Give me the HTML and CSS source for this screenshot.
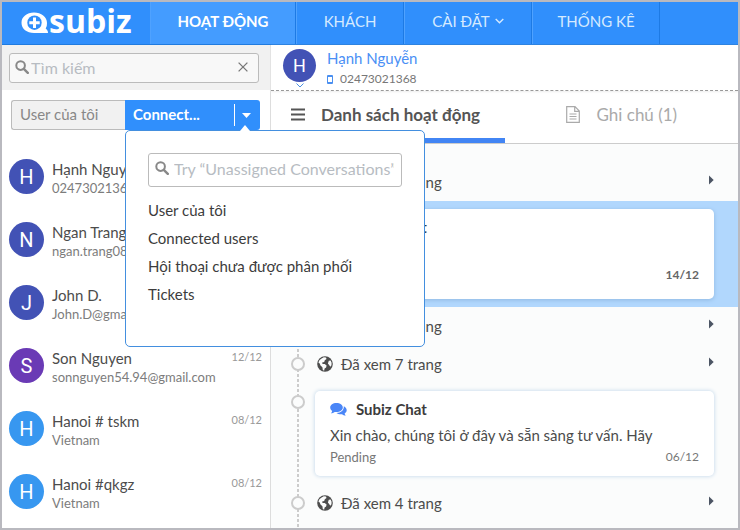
FILE: index.html
```html
<!DOCTYPE html>
<html lang="vi">
<head>
<meta charset="utf-8">
<meta name="viewport" content="width=device-width, initial-scale=1">
<title>Subiz</title>
<link rel="stylesheet" href="styles.css">
</head>
<body>
<svg class="defs" aria-hidden="true">
  <symbol id="search" viewBox="0 0 14 14"><circle cx="5.6" cy="5.6" r="4.3" fill="none" stroke="currentColor" stroke-width="2"/><path d="M8.8 8.8l4 4" stroke="currentColor" stroke-width="2.4" stroke-linecap="round"/></symbol>
  <symbol id="globe" viewBox="0 0 16 16"><circle cx="8" cy="8" r="7.800" fill="#4d4d4d"/><path d="M6.800 1.300l2.200.3.500 1.300-1.700 1.300-.6 1.700-2 .7.3 1.300 2.200.1 1.900 1.500-.5 2-1.500 1-.5 2.300-1.300-.9-.4-2.700-1.900-1.600-.8-2.100L1.400 6.500l1-2.300 2.200-1.800zM11.800 4.800l1.800-.2 1 2.100-.1 2.500-1.200 1.500-1.200-1.800-1.200-1.500z" fill="#fbfcfc"/></symbol>
  <symbol id="right" viewBox="0 0 5 10"><path d="M0 .5L4.700 5 0 9.500z" fill="#4c5564"/></symbol>
  <symbol id="chat" viewBox="0 0 17 14"><path d="M6.500 1C2.900 1 .2 2.900.2 5.500c0 1.500.8 2.700 2 3.500-.1.900-.6 1.600-1.300 2.200 1.500 0 2.800-.5 3.800-1.300l1.800.1c3.600 0 6.300-2 6.300-4.500S10.100 1 6.500 1z" fill="#4a86f7"/><path d="M13.800 4.200c.5 3.700-2.800 6.600-7.300 6.700 1 .9 2.500 1.400 4.100 1.400l1.400-.1c1 .8 2.200 1.300 3.800 1.300-.7-.6-1.100-1.200-1.200-2 1.300-.8 2.100-1.900 2.100-3.200 0-1.800-1.100-3.300-2.900-4.100z" fill="#4a86f7"/></symbol>
</svg>
<div class="app">
  <header class="top">
    <a class="logo" href="#" aria-label="subiz">
      <svg class="logo-mark" viewBox="0 0 28 22" aria-hidden="true"><path d="M13 .5C5.800.5.5 4.800.5 10.700.5 16.700 5.800 21 13 21h14c0-2-.8-3-2.300-4.400A10 10 0 0 0 26 11C26 4.800 20.200.5 13 .5z" fill="#fff"/><circle cx="13.500" cy="10.700" r="7.200" fill="#308ffc"/><path d="M13.500 5.500v10.400M8.300 10.700h10.400" stroke="#fff" stroke-width="3"/></svg>
      <span class="logo-word">subiz</span>
    </a>
    <nav class="nav">
      <a class="nav-item wide active" href="#">HOẠT ĐỘNG</a>
      <a class="nav-item slim" href="#">KHÁCH</a>
      <a class="nav-item" href="#">CÀI ĐẶT <svg class="nav-chev" viewBox="0 0 9 6" aria-hidden="true"><path d="M.7.9l3.800 3.800L8.300.9" fill="none" stroke="currentColor" stroke-width="1.400"/></svg></a>
      <a class="nav-item" href="#">THỐNG KÊ</a>
    </nav>
  </header>
  <main class="body">
    <aside class="side">
      <div class="search-bar">
        <div class="field">
          <svg class="field-icon" aria-hidden="true"><use href="#search"/></svg>
          <input type="text" placeholder="Tìm kiếm" aria-label="Tìm kiếm">
          <button class="clear" type="button" aria-label="Xóa"><svg viewBox="0 0 10 10"><path d="M.6.600l8.800 8.800M9.400.600L.6 9.400" stroke="#777" stroke-width="1.300"/></svg></button>
        </div>
      </div>
      <div class="filter">
        <button class="filter-mine" type="button">User của tôi</button>
        <button class="filter-on" type="button">Connect...</button>
        <button class="filter-more" type="button" aria-label="Mở"><svg viewBox="0 0 9 5"><path d="M0 0h9L4.500 5z" fill="#fff"/></svg></button>
        <div class="popup">
          <div class="field popup-field">
            <svg class="field-icon" aria-hidden="true"><use href="#search"/></svg>
            <input type="text" placeholder="Try “Unassigned Conversations”" aria-label="Try “Unassigned Conversations”">
          </div>
          <ul class="options">
            <li><a href="#">User của tôi</a></li>
            <li><a href="#">Connected users</a></li>
            <li><a href="#">Hội thoại chưa được phân phối</a></li>
            <li><a href="#">Tickets</a></li>
          </ul>
        </div>
      </div>
      <ul class="contacts">
        <li class="contact"><span class="avatar indigo">H</span><div class="who"><p class="name">Hạnh Nguyễn</p><p class="sub">02473021368</p></div></li>
        <li class="contact"><span class="avatar indigo">N</span><div class="who"><p class="name">Ngan Trang</p><p class="sub">ngan.trang08</p></div></li>
        <li class="contact"><span class="avatar indigo">J</span><div class="who"><p class="name">John D.</p><p class="sub">John.D@gmail.com</p></div></li>
        <li class="contact"><span class="avatar purple">S</span><div class="who"><p class="name">Son Nguyen</p><p class="sub">sonnguyen54.94@gmail.com</p></div><time>12/12</time></li>
        <li class="contact"><span class="avatar blue">H</span><div class="who"><p class="name">Hanoi # tskm</p><p class="sub">Vietnam</p></div><time>08/12</time></li>
        <li class="contact"><span class="avatar blue">H</span><div class="who"><p class="name">Hanoi #qkgz</p><p class="sub">Vietnam</p></div><time>08/12</time></li>
      </ul>
    </aside>
    <section class="detail">
      <div class="profile">
        <div class="profile-pic"><span class="avatar small indigo">H</span><svg class="pic-chev" viewBox="0 0 8 5" aria-hidden="true"><path d="M.5.500L4 4 7.500.500" fill="none" stroke="#4a90e2"/></svg></div>
        <div class="profile-text">
          <a class="profile-name" href="#">Hạnh Nguyễn</a>
          <p class="phone"><svg viewBox="0 0 6 9" aria-hidden="true"><path d="M.5.500h5v8h-5zM.5 1.500h5M.5 7.500h5" fill="none" stroke="#4a8ff0"/></svg>02473021368</p>
        </div>
      </div>
      <div class="tabs">
        <a class="tab current" href="#"><svg class="menu" viewBox="0 0 14 13" aria-hidden="true"><path d="M0 1.500h14M0 6.500h14M0 11.500h14" stroke="#555" stroke-width="2"/></svg>Danh sách hoạt động</a>
        <a class="tab" href="#"><svg class="doc" viewBox="0 0 14 17" aria-hidden="true"><path d="M.7.700h8.300l4.300 4.300v11.300H.7zM8.700.700v4.600h4.600M3.500 8h7M3.500 10.500h7M3.500 13h7" fill="none" stroke="#aaa" stroke-width="1.200"/></svg>Ghi chú (1)</a>
      </div>
      <ol class="timeline">
        <li class="visit"><svg class="globe" aria-hidden="true"><use href="#globe"/></svg>Đã xem 4 trang<svg class="right" aria-hidden="true"><use href="#right"/></svg></li>
        <li class="chat selected"><article class="card">
          <h3><svg class="bubbles" aria-hidden="true"><use href="#chat"/></svg>Subiz Chat</h3>
          <p class="message"></p>
          <p class="meta"><span></span><time>14/12</time></p>
        </article></li>
        <li class="visit"><svg class="globe" aria-hidden="true"><use href="#globe"/></svg>Đã xem 5 trang<svg class="right" aria-hidden="true"><use href="#right"/></svg></li>
        <li class="visit"><svg class="globe" aria-hidden="true"><use href="#globe"/></svg>Đã xem 7 trang<svg class="right" aria-hidden="true"><use href="#right"/></svg></li>
        <li class="chat"><article class="card">
          <h3><svg class="bubbles" aria-hidden="true"><use href="#chat"/></svg>Subiz Chat</h3>
          <p class="message">Xin chào, chúng tôi ở đây và sẵn sàng tư vấn. Hãy</p>
          <p class="meta"><span>Pending</span><time>06/12</time></p>
        </article></li>
        <li class="visit"><svg class="globe" aria-hidden="true"><use href="#globe"/></svg>Đã xem 4 trang<svg class="right" aria-hidden="true"><use href="#right"/></svg></li>
      </ol>
    </section>
  </main>
</div>
</body>
</html>
```
FILE: styles.css
```css
*, *::before { box-sizing: border-box; }
body { margin: 0; font-family: Lato, "Noto Sans", sans-serif; font-size: 15px; color: #4c4c4c; }
p, h3, ul, ol { margin: 0; padding: 0; }
ul, ol { list-style: none; }
a { color: inherit; text-decoration: none; }
button, input { font: inherit; color: inherit; border: 0; background: none; padding: 0; }
svg { display: block; flex: none; }
.defs { display: none; }

.app { display: flex; flex-direction: column; height: 100vh; overflow: hidden; border: 2px solid #b9b9bf; }

.top { display: flex; flex: none; height: 43px; background: #308ffc; border-bottom: 1px solid #207bdf; }
.logo { display: flex; width: 148px; padding: 0 0 0 19px; color: #fff; }
.logo-mark { width: 28px; height: 22px; margin-top: 10px; }
.logo-word { font-family: "Open Sans", sans-serif; font-weight: 700; font-size: 32px; line-height: 38px; }
.nav { display: flex; }
.nav-item { display: flex; align-items: center; justify-content: center; gap: 5px; width: 128px; padding-bottom: 4px; border-right: 1px solid #1d7ae4; border-left: 1px solid #4fa2ff; color: #d5eaff; font-size: 15px; }
.nav-item.wide { width: 146px; }
.nav-item.slim { width: 108px; }
.nav-item.active { background: #449cff; color: #fff; font-weight: 700; }
.nav-chev { width: 9px; height: 6px; }

.body { display: flex; flex: 1; min-height: 0; }
.side { width: 268px; flex: none; background: #fff; }
.search-bar { padding: 8px 11px 7px 7px; background: #f1f1f1; }
.field { display: flex; align-items: center; height: 30px; padding: 0 10px 2px 5px; border: 1px solid #bbb; border-radius: 3px; background: #f8f8f8; font-size: 16px; }
.field-icon { width: 14px; height: 14px; color: #888; }
.field input { flex: 1; min-width: 0; padding-left: 2px; outline: 0; }
.field input::placeholder { color: #b7bcc2; opacity: 1; }
.clear svg { width: 10px; height: 10px; }

.filter { position: relative; display: flex; height: 30px; margin: 10px 10px 0 9px; }
.filter-mine { width: 114px; padding: 0 0 2px 8px; text-align: left; border: 1px solid #bbb; border-right: 0; border-radius: 3px 0 0 3px; background: #f1f1f1; color: #888; }
.filter-on { flex: 1; padding: 0 0 2px 8px; text-align: left; background: #308ffc; color: #fff; font-weight: 700; }
.filter-more { display: flex; align-items: center; justify-content: center; width: 26px; padding-right: 2px; background: linear-gradient(#fff, #fff) 0 4px / 1px 22px no-repeat #308ffc; border-radius: 0 3px 3px 0; }
.filter-more svg { width: 9px; height: 5px; }
.popup { position: absolute; z-index: 2; top: 30px; left: 114px; width: 300px; height: 217px; padding: 22px; border: 1px solid #438fdf; border-radius: 5px; background: #fff; }
.popup::before { content: ""; position: absolute; top: -6px; right: 174px; border: solid transparent; border-width: 0 5px 6px; border-bottom-color: #fff; }
.popup-field { height: 34px; padding: 0 7px 4px 6px; background: #fff; }
.popup-field input { padding-left: 5px; }
.options { padding-top: 9px; font-size: 15px; line-height: 28px; color: #3c3c3c; }

.contacts { padding-top: 15px; }
.contact { display: flex; height: 63px; padding: 14px 8px 0 7px; }
.avatar { display: grid; place-items: center; flex: none; width: 35px; height: 35px; border-radius: 50%; color: #fff; font: 20px Roboto, sans-serif; }
.avatar.small { width: 33px; height: 33px; font-size: 18px; }
.indigo { background: #4252b5; }
.purple { background: #6a3ab5; }
.blue { background: #3797f0; }
.who { flex: 1; padding-left: 8px; }
.name { font-size: 15px; line-height: 20px; }
.sub { font-size: 13px; line-height: 18px; color: #7c7c7c; }
.contact time { font-size: 11px; line-height: 18px; color: #999; }

.detail { flex: 1; min-width: 0; display: flex; flex-direction: column; border-left: 1px solid #ddd; background: #fff; }
.profile { display: flex; flex: none; height: 46px; padding: 4px 12px 0; border-bottom: 1px dashed #999; box-shadow: 0 1px 2px #eee; }
.pic-chev { width: 8px; height: 5px; margin: 1px auto 0; }
.profile-text { padding-left: 11px; }
.profile-name { display: block; font-size: 15px; line-height: 18px; color: #4a8ff5; }
.phone { display: flex; align-items: center; gap: 7px; font-size: 12px; line-height: 24px; color: #777; }
.phone svg { width: 6px; height: 9px; }
.tabs { display: flex; flex: none; height: 53px; border-bottom: 1px solid #ccc; font-size: 17px; }
.tab { display: flex; align-items: center; width: 50%; padding: 0 0 5px 61px; color: #aaa; }
.tab.current { padding: 0 0 0 20px; border-bottom: 5px solid #4285f4; color: #555; font-weight: 700; }
.menu { width: 14px; height: 13px; margin-right: 16px; }
.doc { width: 14px; height: 17px; margin-right: 17px; }

.timeline { flex: 1; padding-top: 19px; background: linear-gradient(#ccc 60%, transparent 60%) 26px 0 / 2px 5px repeat-y #fbfcfc; }
.visit { position: relative; display: flex; align-items: center; height: 38px; padding: 0 24px 0 46px; font-size: 15px; }
.globe { width: 16px; height: 16px; margin-right: 8px; }
.right { width: 5px; height: 10px; margin: 0 0 4px auto; }
.visit::before, .chat::before { content: ""; position: absolute; left: 20px; top: 12px; width: 14px; height: 14px; border: 2px solid #ccc; border-radius: 50%; background: #fbfcfc; }
.chat { position: relative; padding: 8px 24px 8px 44px; }
.chat.selected { background: #b1d7fd; }
.card { padding: 8px 15px 9px; border-radius: 5px; background: #fff; box-shadow: 0 0 4px #bcd3e8; }
.selected .card { padding-bottom: 14px; box-shadow: 0 1px 4px #8fb8e2; }
.card h3 { display: flex; align-items: center; gap: 9px; font-size: 15px; line-height: 20px; color: #3c3c3c; }
.bubbles { width: 17px; height: 14px; }
.message { min-height: 24px; margin-top: 4px; font-size: 15px; line-height: 24px; }
.meta { display: flex; justify-content: space-between; font-size: 13px; line-height: 20px; color: #777; }
.meta time { font-size: 12px; }
.selected .meta { font-weight: 700; color: #666; }
```
